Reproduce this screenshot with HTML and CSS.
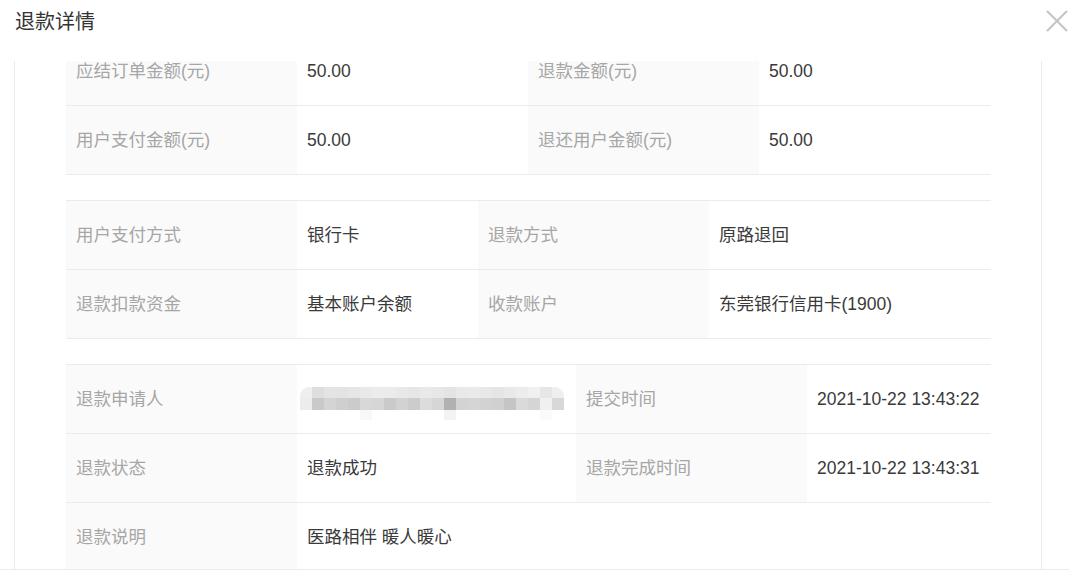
FILE: index.html
```html
<!DOCTYPE html>
<html lang="zh-CN">
<head>
    <meta charset="UTF-8">
    <title>退款详情</title>
    <link rel="stylesheet" href="styles.css">
</head>
<body>

    <!-- Dialog header -->
    <div class="dialog-header">
        <h2 class="dialog-title">退款详情</h2>
        <span class="dialog-close">
            <svg width="22" height="22" viewBox="0 0 22 22">
                <path d="M1 1 L21 21 M21 1 L1 21" stroke="#c4c4c4" stroke-width="2" fill="none"/>
            </svg>
        </span>
    </div>

    <!-- Dialog body (scrolled) -->
    <div class="dialog-body">
        <div class="detail-list">

            <div class="detail-table t1">
                <div class="detail-row">
                    <div class="cell label">应结订单金额(元)</div>
                    <div class="cell value">50.00</div>
                    <div class="cell label">退款金额(元)</div>
                    <div class="cell value">50.00</div>
                </div>
                <div class="detail-row">
                    <div class="cell label">用户支付金额(元)</div>
                    <div class="cell value">50.00</div>
                    <div class="cell label">退还用户金额(元)</div>
                    <div class="cell value">50.00</div>
                </div>
            </div>

            <div class="detail-table t2">
                <div class="detail-row">
                    <div class="cell label">用户支付方式</div>
                    <div class="cell value">银行卡</div>
                    <div class="cell label">退款方式</div>
                    <div class="cell value">原路退回</div>
                </div>
                <div class="detail-row">
                    <div class="cell label">退款扣款资金</div>
                    <div class="cell value">基本账户余额</div>
                    <div class="cell label">收款账户</div>
                    <div class="cell value">东莞银行信用卡(1900)</div>
                </div>
            </div>

            <div class="detail-table t3">
                <div class="detail-row">
                    <div class="cell label">退款申请人</div>
                    <div class="cell value masked">
                        <svg width="264" height="34" viewBox="0 0 264 34">
                            <defs>
                                <clipPath id="pill">
                                    <rect x="0" y="0" width="264" height="40" rx="9"/>
                                </clipPath>
                            </defs>
                            <g clip-path="url(#pill)">
                                <rect x="0" y="0" width="12" height="11" fill="#efefef"/>
                                <rect x="12" y="0" width="12" height="11" fill="#dedede"/>
                                <rect x="24" y="0" width="12" height="11" fill="#e4e4e4"/>
                                <rect x="36" y="0" width="12" height="11" fill="#e3e3e3"/>
                                <rect x="48" y="0" width="12" height="11" fill="#e6e6e6"/>
                                <rect x="60" y="0" width="12" height="11" fill="#e9e9e9"/>
                                <rect x="72" y="0" width="12" height="11" fill="#ececec"/>
                                <rect x="84" y="0" width="12" height="11" fill="#ebebeb"/>
                                <rect x="96" y="0" width="12" height="11" fill="#e8e8e8"/>
                                <rect x="108" y="0" width="12" height="11" fill="#e6e6e6"/>
                                <rect x="120" y="0" width="12" height="11" fill="#e9e9e9"/>
                                <rect x="132" y="0" width="12" height="11" fill="#e7e7e7"/>
                                <rect x="144" y="0" width="12" height="11" fill="#e4e4e4"/>
                                <rect x="156" y="0" width="12" height="11" fill="#e9e9e9"/>
                                <rect x="168" y="0" width="12" height="11" fill="#eaeaea"/>
                                <rect x="180" y="0" width="12" height="11" fill="#e8e8e8"/>
                                <rect x="192" y="0" width="12" height="11" fill="#e5e5e5"/>
                                <rect x="204" y="0" width="12" height="11" fill="#e9e9e9"/>
                                <rect x="216" y="0" width="12" height="11" fill="#ececec"/>
                                <rect x="228" y="0" width="12" height="11" fill="#f0f0f0"/>
                                <rect x="240" y="0" width="12" height="11" fill="#e6e6e6"/>
                                <rect x="252" y="0" width="12" height="11" fill="#efefef"/>

                                <rect x="0" y="11" width="12" height="12" fill="#ececec"/>
                                <rect x="12" y="11" width="12" height="12" fill="#c9c9c9"/>
                                <rect x="24" y="11" width="12" height="12" fill="#d4d4d4"/>
                                <rect x="36" y="11" width="12" height="12" fill="#cfcfcf"/>
                                <rect x="48" y="11" width="12" height="12" fill="#cbcbcb"/>
                                <rect x="60" y="11" width="12" height="12" fill="#d8d8d8"/>
                                <rect x="72" y="11" width="12" height="12" fill="#d6d6d6"/>
                                <rect x="84" y="11" width="12" height="12" fill="#cacaca"/>
                                <rect x="96" y="11" width="12" height="12" fill="#d2d2d2"/>
                                <rect x="108" y="11" width="12" height="12" fill="#cccccc"/>
                                <rect x="120" y="11" width="12" height="12" fill="#dcdcdc"/>
                                <rect x="132" y="11" width="12" height="12" fill="#d6d6d6"/>
                                <rect x="144" y="11" width="12" height="12" fill="#b1b1b1"/>
                                <rect x="156" y="11" width="12" height="12" fill="#d3d3d3"/>
                                <rect x="168" y="11" width="12" height="12" fill="#d5d5d5"/>
                                <rect x="180" y="11" width="12" height="12" fill="#d2d2d2"/>
                                <rect x="192" y="11" width="12" height="12" fill="#d0d0d0"/>
                                <rect x="204" y="11" width="12" height="12" fill="#c5c5c5"/>
                                <rect x="216" y="11" width="12" height="12" fill="#dadada"/>
                                <rect x="228" y="11" width="12" height="12" fill="#d5d5d5"/>
                                <rect x="240" y="11" width="12" height="12" fill="#f0f0f0"/>
                                <rect x="252" y="11" width="12" height="12" fill="#d8d8d8"/>

                                <rect x="60" y="23" width="12" height="10" fill="#f8f8f8"/>
                                <rect x="144" y="23" width="12" height="10" fill="#f3f3f3"/>
                                <rect x="240" y="23" width="12" height="10" fill="#fafafa"/>
                            </g>
                        </svg>
                    </div>
                    <div class="cell label">提交时间</div>
                    <div class="cell value">2021-10-22 13:43:22</div>
                </div>
                <div class="detail-row">
                    <div class="cell label">退款状态</div>
                    <div class="cell value">退款成功</div>
                    <div class="cell label">退款完成时间</div>
                    <div class="cell value">2021-10-22 13:43:31</div>
                </div>
                <div class="detail-row">
                    <div class="cell label">退款说明</div>
                    <div class="cell value wide">医路相伴 暖人暖心</div>
                </div>
            </div>

        </div>
    </div>

    <div class="dialog-footer"></div>

</body>
</html>
```

FILE: styles.css
```css
body {
    font-family: "Liberation Sans", "Noto Sans CJK SC", sans-serif;
    margin: 0;
    padding: 0;
    background-color: #fff;
    color: #333;
    width: 1069px;
    height: 587px;
    overflow: hidden;
}
.dialog-header {
    position: relative;
    height: 42px;
    padding: 0 15px;
    margin-bottom: 19px;
}
.dialog-title {
    margin: 0;
    font-size: 20px;
    font-weight: normal;
    line-height: 44px;
    color: #333;
}
.dialog-close {
    position: absolute;
    top: 10px;
    right: 1px;
    width: 22px;
    height: 22px;
    cursor: pointer;
}
.dialog-close svg {
    display: block;
}
.dialog-body {
    box-sizing: border-box;
    width: 1028px;
    height: 508px;
    margin-left: 14px;
    padding: 0 50px 0 51px;
    border-left: 1px solid #ebebeb;
    border-right: 1px solid #ebebeb;
    overflow: hidden;
}
.detail-list {
    margin-top: -25px; /* scrolled position */
}
.detail-table {
    border-top: 1px solid #ebebeb;
    margin-bottom: 25px;
}
.detail-row {
    display: grid;
    height: 68px;
    border-bottom: 1px solid #ebebeb;
}
.t1 .detail-row {
    grid-template-columns: 231px 231px 231px 232px;
}
.t2 .detail-row {
    grid-template-columns: 231px 181px 231px 282px;
}
.t3 .detail-row {
    grid-template-columns: 231px 279px 231px 184px;
}
.cell {
    display: flex;
    align-items: center;
    padding-left: 10px;
    font-size: 17.5px;
    line-height: 20px;
    white-space: nowrap;
}
.cell.label {
    background-color: #fafafa;
    color: #a6a6a6;
}
.cell.value {
    color: #3a3a3a;
}
.cell.masked {
    padding-left: 3px;
    padding-top: 10px;
}
.cell.masked svg {
    display: block;
}
.cell.wide {
    grid-column: 2 / 5;
}
.dialog-footer {
    border-top: 1px solid #ebebeb;
    height: 17px;
}
```
